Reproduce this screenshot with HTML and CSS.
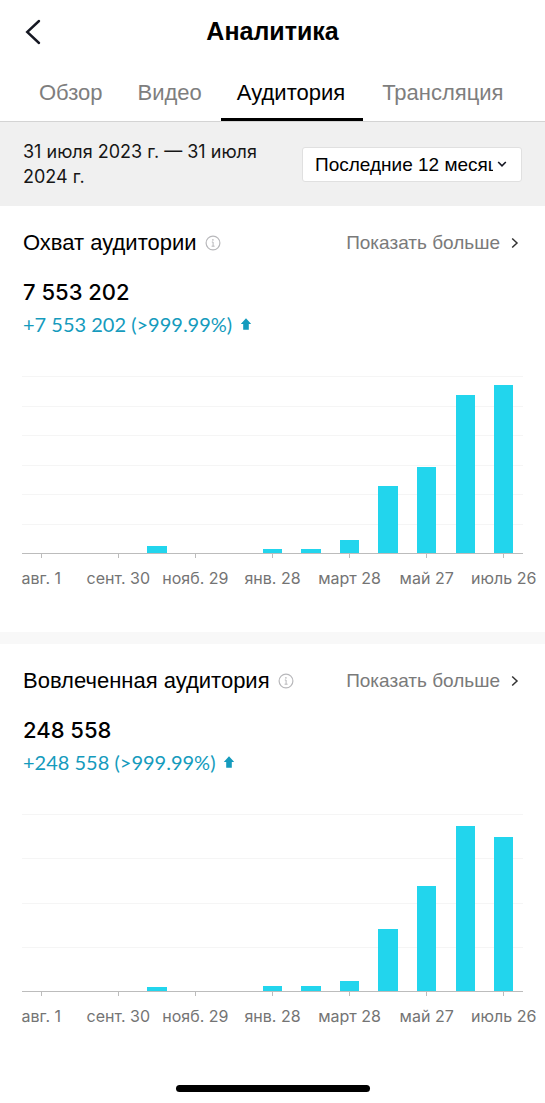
FILE: index.html
```html
<!DOCTYPE html>
<html lang="ru">
<head>
<meta charset="utf-8">
<meta name="viewport" content="width=device-width, initial-scale=1">
<title>Аналитика</title>
<link rel="stylesheet" href="styles.css">
</head>
<body>
<header class="topbar">
  <button class="back" type="button" aria-label="Назад">
    <svg width="16" height="26" viewBox="0 0 16 26" fill="none" stroke="#161823" stroke-width="2.4" stroke-linecap="round"><path d="M14 2 2.2 13 14 24"/></svg>
  </button>
  <h1 class="title">Аналитика</h1>
</header>
<nav class="tabs">
  <a class="tab" href="#overview">Обзор</a>
  <a class="tab" href="#video">Видео</a>
  <a class="tab tab-active" href="#audience" aria-current="page">Аудитория</a>
  <a class="tab" href="#live">Трансляция</a>
</nav>
<div class="period">
  <p class="dates">31 июля 2023 г. — 31 июля 2024 г.</p>
  <div class="picker">
    <select class="range" aria-label="Период">
      <option>Последние 12 месяцев</option>
    </select>
    <svg class="caret" width="10" height="8" viewBox="0 0 10 8" fill="none" stroke="#161823" stroke-width="1.6"><path d="M1.2 2 5 5.8 8.8 2"/></svg>
  </div>
</div>
<main>
  <section class="card">
    <div class="card-head">
      <h2 class="card-title">Охват аудитории</h2>
      <svg class="info" width="16" height="16" viewBox="0 0 16 16" fill="none" stroke="#b8b8bb" stroke-width="1.2"><circle cx="8" cy="8" r="6.9"/><path d="M6.8 7H8.1V11.2M6.6 11.2H9.6" stroke-width="1"/><circle cx="7.9" cy="4.9" r=".8" fill="#b8b8bb" stroke="none"/></svg>
      <a class="more" href="#reach">Показать больше
        <svg width="8" height="12" viewBox="0 0 8 12" fill="none" stroke="#333" stroke-width="1.5"><path d="M1.2 1.5 6 6 1.2 10.5"/></svg>
      </a>
    </div>
    <p class="total">7 553 202</p>
    <p class="change">+7 553 202 (&gt;999.99%)
      <svg width="12" height="12" viewBox="0 0 12 12" fill="#159bbd"><path d="M6 .3 11.2 6H8.8V11.7H3.2V6H.8Z"/></svg>
    </p>
    <div class="chart">
      <div class="lines"><i></i><i></i><i></i><i></i><i></i><i></i></div>
      <div class="bars">
        <b></b><b></b><b></b><b style="height:4%"></b><b></b><b></b><b style="height:2.5%"></b><b style="height:2%"></b><b style="height:7.3%"></b><b style="height:37.6%"></b><b style="height:48.6%"></b><b style="height:89%"></b><b style="height:95.2%"></b>
      </div>
    </div>
    <div class="axis">
      <span class="mark">авг. 1</span><span class="mark">сент. 30</span><span class="mark">нояб. 29</span><span class="mark">янв. 28</span><span class="mark">март 28</span><span class="mark">май 27</span><span class="mark">июль 26</span>
    </div>
  </section>
  <section class="card">
    <div class="card-head">
      <h2 class="card-title">Вовлеченная аудитория</h2>
      <svg class="info" width="16" height="16" viewBox="0 0 16 16" fill="none" stroke="#b8b8bb" stroke-width="1.2"><circle cx="8" cy="8" r="6.9"/><path d="M6.8 7H8.1V11.2M6.6 11.2H9.6" stroke-width="1"/><circle cx="7.9" cy="4.9" r=".8" fill="#b8b8bb" stroke="none"/></svg>
      <a class="more" href="#engaged">Показать больше
        <svg width="8" height="12" viewBox="0 0 8 12" fill="none" stroke="#333" stroke-width="1.5"><path d="M1.2 1.5 6 6 1.2 10.5"/></svg>
      </a>
    </div>
    <p class="total">248 558</p>
    <p class="change">+248 558 (&gt;999.99%)
      <svg width="12" height="12" viewBox="0 0 12 12" fill="#159bbd"><path d="M6 .3 11.2 6H8.8V11.7H3.2V6H.8Z"/></svg>
    </p>
    <div class="chart">
      <div class="lines"><i></i><i></i><i></i><i></i></div>
      <div class="bars">
        <b></b><b></b><b></b><b style="height:2.2%"></b><b></b><b></b><b style="height:2.8%"></b><b style="height:2.8%"></b><b style="height:5.7%"></b><b style="height:35.3%"></b><b style="height:59.6%"></b><b style="height:93.5%"></b><b style="height:87%"></b>
      </div>
    </div>
    <div class="axis">
      <span class="mark">авг. 1</span><span class="mark">сент. 30</span><span class="mark">нояб. 29</span><span class="mark">янв. 28</span><span class="mark">март 28</span><span class="mark">май 27</span><span class="mark">июль 26</span>
    </div>
  </section>
</main>
<footer class="home"><span class="home-bar"></span></footer>
</body>
</html>
```
FILE: styles.css
```css
* { box-sizing: border-box; }
body {
  margin: 0;
  background: #fff;
  color: #000;
  font-family: "Liberation Sans", Arial, sans-serif;
  overflow-x: hidden;
}
h1, h2, p { margin: 0; font-weight: 400; }
a { text-decoration: none; color: inherit; }
svg { display: block; flex: none; }

.topbar {
  display: grid;
  grid-template-columns: 48px 1fr 48px;
  align-items: center;
  height: 63px;
}
.back {
  padding: 0 0 0 25px;
  border: 0;
  background: none;
}
.title {
  font-size: 25px;
  font-weight: 700;
  text-align: center;
}
.tabs {
  display: flex;
  gap: 3px;
  height: 59px;
  padding: 0 23px;
  border-bottom: 1px solid #d4d4d4;
}
.tab {
  padding: 0 16px;
  font-size: 22px;
  line-height: 60px;
  color: #7e7e7e;
}
.tab-active {
  padding-right: 18px;
  color: #000;
  border-bottom: 3px solid #000;
}
.period {
  display: flex;
  align-items: center;
  justify-content: space-between;
  gap: 24px;
  height: 84px;
  padding: 0 23px;
  background: #f0f0f0;
}
.dates {
  flex: 1;
  font-family: Inter, sans-serif;
  font-size: 18px;
  line-height: 25px;
  color: #161616;
}
.picker {
  display: grid;
  grid-template-columns: 1fr 38px;
  align-items: center;
  width: 220px;
  height: 35px;
  border: 1px solid #e0e0e0;
  border-radius: 3px;
  background: #fff;
}
.range {
  grid-area: 1 / 1 / 2 / 3;
  appearance: none;
  width: 100%;
  height: 33px;
  padding: 0 28px 0 12px;
  border: 0;
  background: none;
  color: #000;
  font-family: "Liberation Sans", Arial, sans-serif;
  font-size: 19px;
}
.caret {
  grid-area: 1 / 2;
  justify-self: center;
  pointer-events: none;
}

.card { padding: 24px 22px 42px; }
.card + .card { border-top: 12px solid #f8f8f8; }
.card-head {
  display: flex;
  align-items: center;
  height: 26px;
  padding-left: 1px;
}
.card-title { font-size: 22px; }
.info { margin-left: 8px; }
.more {
  display: flex;
  align-items: center;
  gap: 11px;
  margin-left: auto;
  padding-right: 4px;
  font-size: 19px;
  color: #7a7a7a;
}
.total {
  margin-top: 22px;
  padding-left: 1px;
  font-family: Inter, sans-serif;
  font-size: 22px;
  font-weight: 500;
  line-height: 28px;
}
.change {
  display: flex;
  align-items: center;
  gap: 8px;
  margin-top: 6px;
  padding-left: 1px;
  font-family: Lato, sans-serif;
  font-size: 20px;
  line-height: 24px;
  color: #159bbd;
}
.chart {
  display: grid;
  height: 178px;
  margin-top: 40px;
  border-bottom: 1px solid #bcbcbc;
}
.lines, .bars { grid-area: 1 / 1; }
.lines { display: flex; flex-direction: column; }
.lines i { flex: 1; border-top: 1px solid #f5f5f5; }
.bars {
  display: grid;
  grid-template-columns: repeat(13, 1fr);
  align-items: end;
  justify-items: center;
}
.bars b { width: 50%; background: #22d5ed; }
.axis {
  display: grid;
  grid-template-columns: repeat(13, 1fr);
}
.mark {
  display: flex;
  flex-direction: column;
  align-items: center;
  width: 0;
  justify-self: center;
  gap: 8px;
  font-family: Inter, sans-serif;
  font-size: 16px;
  line-height: 24px;
  color: #747474;
  white-space: nowrap;
}
.mark::before {
  content: "";
  width: 1px;
  height: 4px;
  background: #bcbcbc;
}
.mark:nth-child(1) { grid-column: 1; }
.mark:nth-child(2) { grid-column: 3; }
.mark:nth-child(3) { grid-column: 5; }
.mark:nth-child(4) { grid-column: 7; }
.mark:nth-child(5) { grid-column: 9; }
.mark:nth-child(6) { grid-column: 11; }
.mark:nth-child(7) { grid-column: 13; }
.home {
  display: flex;
  justify-content: center;
  padding: 15px 0 11px;
}
.home-bar {
  width: 194px;
  height: 7px;
  border-radius: 4px;
  background: #000;
}
```
